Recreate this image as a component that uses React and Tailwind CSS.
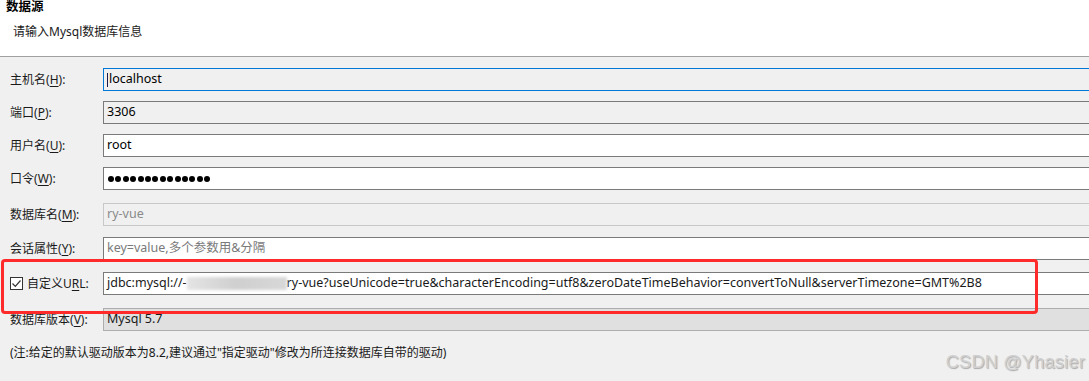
import React from 'react';

const font = { fontFamily: '"Noto Sans", "Noto Sans CJK SC", sans-serif' };

const Label = ({ text, k, width = 'w-[93px]' }) => (
    <span className={`${width} shrink-0 text-[12px] text-[#1a1a1a] leading-none`}>
        {text}(<span className="underline underline-offset-2">{k}</span>):
    </span>
);

const Field = ({ label, k, className = '', children, mt }) => (
    <div className={`flex items-center pl-[10px] ${mt}`}>
        <Label text={label} k={k} />
        <div className={`w-[1000px] h-[23px] shrink-0 border flex items-center px-[3px] text-[12.5px] leading-none ${className}`}>
            {children}
        </div>
    </div>
);

const App = () => {
    return (
        <div className="relative w-[1089px] h-[381px] overflow-hidden bg-[#f0f0f0]" style={font}>
            {/* header */}
            <div className="h-[57px] bg-white border-b border-[#a0a0a0] relative">
                <div className="absolute left-[6px] top-[-1px] text-[12.5px] leading-[15px] font-bold text-black">数据源</div>
                <div className="absolute left-[13px] top-[23px] text-[12px] text-[#1a1a1a]">请输入Mysql数据库信息</div>
            </div>

            <div className="flex flex-col">
                <Field label="主机名" k="H" mt="mt-[11px]" className="border-[#0078d7] bg-[#f0f0f0]">
                    <span className="w-px h-[14px] bg-[#1a1a4a] mr-[1px]" />
                    <span>localhost</span>
                </Field>
                <Field label="端口" k="P" mt="mt-[10px]" className="border-[#7a7a7a] bg-[#f0f0f0]">
                    3306
                </Field>
                <Field label="用户名" k="U" mt="mt-[10px]" className="border-[#7a7a7a] bg-white">
                    root
                </Field>
                <Field label="口令" k="W" mt="mt-[10px]" className="border-[#7a7a7a] bg-white">
                    <div className="flex gap-[1.4px] pl-[1px]">
                        {Array.from({ length: 14 }).map((_, i) => (
                            <span key={i} className="w-[6px] h-[6px] rounded-full bg-black" />
                        ))}
                    </div>
                </Field>
                <Field label="数据库名" k="M" mt="mt-[13px]" className="border-[#c8c8c8] bg-[#f0f0f0] text-[#8a8a8a]">
                    ry-vue
                </Field>
                <Field label="会话属性" k="Y" mt="mt-[11px]" className="border-[#7a7a7a] bg-white text-[#7a7a7a]">
                    key=value,多个参数用&amp;分隔
                </Field>
                <div className="flex items-center pl-[10px] mt-[12px]">
                    <div className="w-[93px] shrink-0 flex items-center gap-[4px]">
                        <span className="w-[13px] h-[13px] border border-[#333] bg-white flex items-center justify-center">
                            <svg width="11" height="11" viewBox="0 0 11 11">
                                <path d="M1.5 5.5 L4.3 8.3 L9.5 2.5" fill="none" stroke="#333" strokeWidth="1.2" />
                            </svg>
                        </span>
                        <span className="text-[12px] text-[#1a1a1a] leading-none">
                            自定义U<span className="underline underline-offset-2">R</span>L:
                        </span>
                    </div>
                    <div className="w-[1000px] h-[23px] shrink-0 border border-[#7a7a7a] bg-white flex items-center px-[3px] text-[12.5px] leading-none text-[#1a1a1a]">
                        <span>jdbc:mysql://-</span>
                        <span className="w-[100px] h-[13px] shrink-0 bg-gradient-to-r from-[#e4e4e4] via-[#cfcfcf] to-[#d8d8d8] blur-[1.5px]" />
                        <span>ry-vue?useUnicode=true&amp;characterEncoding=utf8&amp;zeroDateTimeBehavior=convertToNull&amp;serverTimezone=GMT%2B8</span>
                    </div>
                </div>
                <Field label="数据库版本" k="V" mt="mt-[13px]" className="border-[#adadad] bg-[#e0e0e0] text-[#1a1a1a]">
                    Mysql 5.7
                </Field>
                <div className="pl-[10px] mt-[13px] text-[12px] text-[#1a1a1a]">
                    (注:给定的默认驱动版本为8.2,建议通过"指定驱动"修改为所连接数据库自带的驱动)
                </div>
            </div>

            {/* annotation */}
            <div className="absolute left-[1px] top-[259px] w-[1037px] h-[55px] border-[3px] border-[#ff2a2a] rounded-[4px] pointer-events-none" />
            <div
                className="absolute right-[4px] bottom-[5px] text-[18px] text-[#d0d0d0] tracking-[0.3px]"
                style={{ fontFamily: '"Liberation Sans", sans-serif', textShadow: '1px 1px 1px #a8a8a8' }}
            >
                CSDN @Yhasier
            </div>
        </div>
    );
};

export default App;
